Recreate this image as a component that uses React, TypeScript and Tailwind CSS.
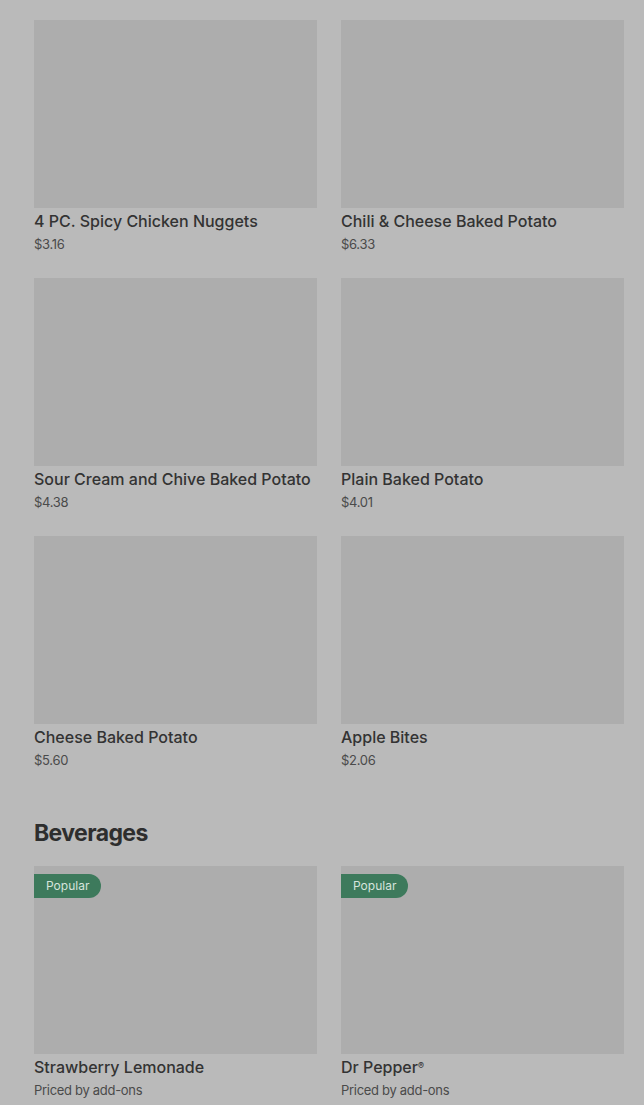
import type { ReactNode } from "react";

type Item = {
  name: ReactNode;
  price: string;
  popular?: boolean;
};

const sides: Item[] = [
  { name: "4 PC. Spicy Chicken Nuggets", price: "$3.16" },
  { name: "Chili & Cheese Baked Potato", price: "$6.33" },
  { name: "Sour Cream and Chive Baked Potato", price: "$4.38" },
  { name: "Plain Baked Potato", price: "$4.01" },
  { name: "Cheese Baked Potato", price: "$5.60" },
  { name: "Apple Bites", price: "$2.06" },
];

const beverages: Item[] = [
  { name: "Strawberry Lemonade", price: "Priced by add-ons", popular: true },
  {
    name: (
      <>
        Dr Pepper<sup className="text-[9px] leading-none">®</sup>
      </>
    ),
    price: "Priced by add-ons",
    popular: true,
  },
];

const ItemCard = ({ name, price, popular = false }: Item) => {
  return (
    <div className="flex flex-col">
      <div className="relative h-[188px] w-full bg-[#adadad]">
        {popular && (
          <div className="absolute left-0 top-2 flex h-6 items-center rounded-r-full bg-[#3d7a5c] pl-3 pr-3">
            <p className="text-[12px] leading-none text-[#d6e4dc]">Popular</p>
          </div>
        )}
      </div>
      <p className="mt-[3px] text-[16px] font-medium leading-5 text-[#333333] whitespace-nowrap">
        {name}
      </p>
      <p className="mt-1 text-[13px] leading-[18px] tracking-[-0.3px] text-[#4a4a4a]">
        {price}
      </p>
    </div>
  );
};

export default function App() {
  return (
    <div
      className="min-h-[1105px] w-full bg-[#bababa] pl-[34px] pr-[20px] pt-5"
      style={{ fontFamily: "Inter, 'Noto Sans', sans-serif" }}
    >
      <div className="grid grid-cols-2 gap-x-6 gap-y-[25px]">
        {sides.map((item) => (
          <ItemCard key={item.price + String(item.name)} {...item} />
        ))}
      </div>
      <h2 className="mt-[48px] text-[23px] font-bold leading-8 tracking-[-0.6px] text-[#2e2e2e]">
        Beverages
      </h2>
      <div className="mt-[17px] grid grid-cols-2 gap-x-6 gap-y-[25px]">
        {beverages.map((item, i) => (
          <ItemCard key={i} {...item} />
        ))}
      </div>
    </div>
  );
}
